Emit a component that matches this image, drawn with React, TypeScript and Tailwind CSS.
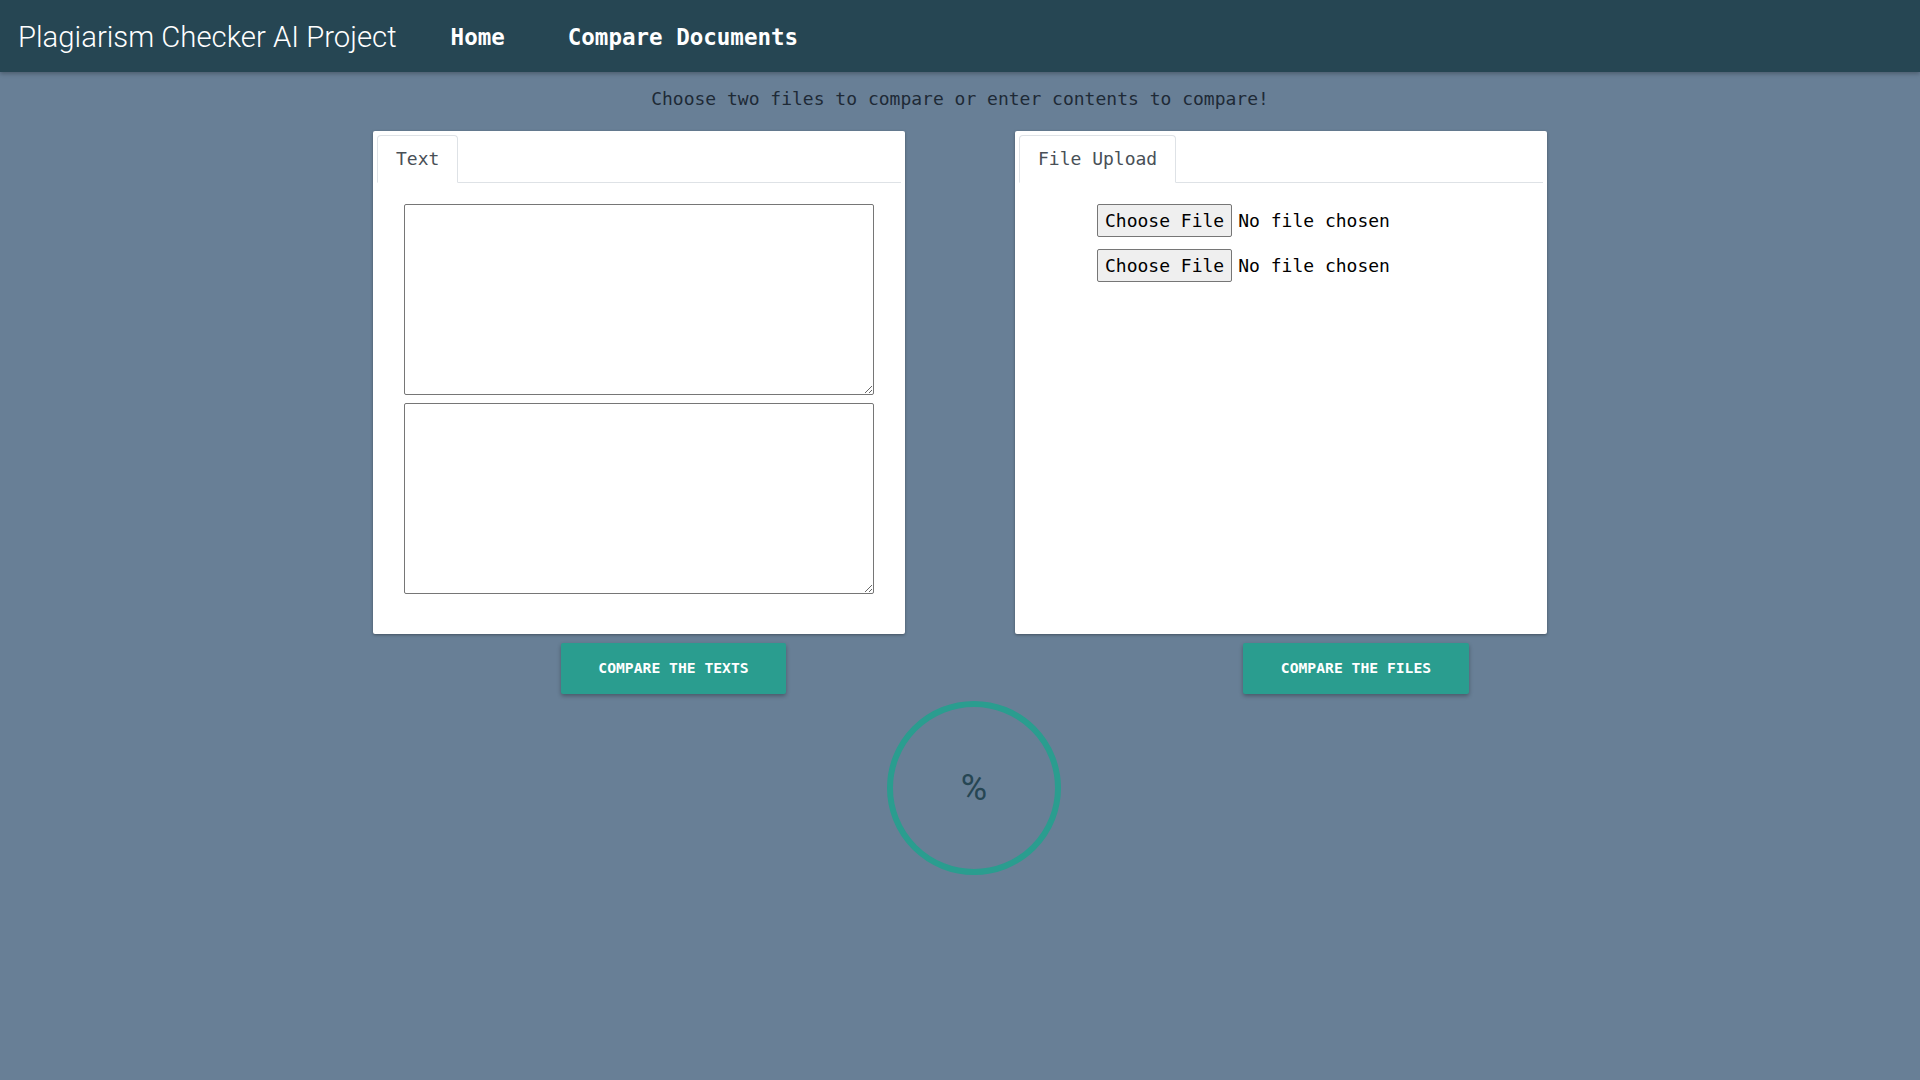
import React from "react";

const mono = "font-['DejaVu_Sans_Mono','Liberation_Mono',monospace]";

function Tab({ label }: { label: string }) {
  return (
    <div className="flex border-b border-[#dee2e6]">
      <div className="-mb-px rounded-t-[4px] border border-[#dee2e6] border-b-white bg-white px-[18px] pt-[9px] pb-[10px] text-[18px] leading-[27px] text-[#495057]">
        {label}
      </div>
    </div>
  );
}

const fileCls =
  "text-[18px] leading-[27px] text-black file:mr-[6px] file:rounded-[2px] file:border file:border-solid file:border-[#767676] file:bg-[#efefef] file:px-[7px] file:py-[2px] file:text-black";

export default function App() {
  return (
    <div className={`min-h-screen bg-[#687f96] ${mono}`}>
      <header className="flex h-[72px] items-center bg-[#264653] pl-[18px] pt-[4px] shadow-[0_2px_4px_rgba(0,0,0,0.25)]">
        <span className="font-['Roboto',sans-serif] text-[29.3px] font-light text-white">
          Plagiarism Checker AI Project
        </span>
        <nav className="flex items-center text-[22.5px] font-bold text-white">
          <span className="ml-[54px]">Home</span>
          <span className="ml-[63px]">Compare Documents</span>
        </nav>
      </header>

      <p className="mt-[13px] text-center text-[18px] leading-[27px] text-[#1e2a36]">
        Choose two files to compare or enter contents to compare!
      </p>

      <div className="mt-[19px] flex gap-[110px] pl-[373px]">
        <div className="h-[503px] w-[532px] rounded-[2px] bg-white px-[4px] pt-[4px] shadow-[0_1px_3px_rgba(0,0,0,0.35)]">
          <Tab label="Text" />
          <div className="flex flex-col gap-[8px] px-[27px] pt-[21px]">
            <textarea className="h-[191px] w-[470px] rounded-[2px] border border-[#767676] bg-white" />
            <textarea className="h-[191px] w-[470px] rounded-[2px] border border-[#767676] bg-white" />
          </div>
        </div>
        <div className="h-[503px] w-[532px] rounded-[2px] bg-white px-[4px] pt-[4px] shadow-[0_1px_3px_rgba(0,0,0,0.35)]">
          <Tab label="File Upload" />
          <div className="flex flex-col gap-[12px] pl-[78px] pt-[21px]">
            <input type="file" className={fileCls} />
            <input type="file" className={fileCls} />
          </div>
        </div>
      </div>

      <div className="mt-[9px] flex">
        <button className="ml-[561px] h-[51px] w-[225px] rounded-[2px] bg-[#2a9d8f] text-[14.7px] font-bold text-white shadow-[0_2px_4px_rgba(0,0,0,0.3)]">
          COMPARE THE TEXTS
        </button>
        <button className="ml-[457px] h-[51px] w-[226px] rounded-[2px] bg-[#2a9d8f] text-[14.7px] font-bold text-white shadow-[0_2px_4px_rgba(0,0,0,0.3)]">
          COMPARE THE FILES
        </button>
      </div>

      <div className="ml-[887px] mt-[7px] flex h-[174px] w-[174px] items-center justify-center rounded-full border-[6px] border-[#2a9d8f]">
        <span className="font-['Roboto',sans-serif] text-[36px] text-[#264653]">%</span>
      </div>
    </div>
  );
}
